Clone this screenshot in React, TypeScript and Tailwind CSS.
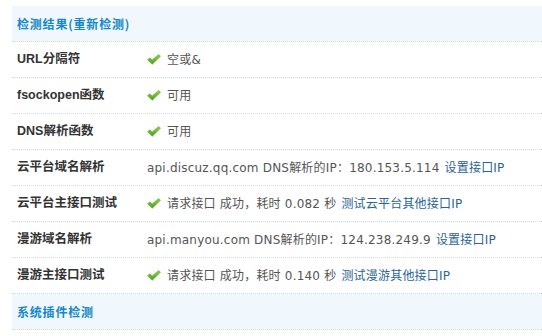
function Check() {
  return (
    <svg width="14" height="11" viewBox="0 0 14 11" className="mr-[6px] shrink-0">
      <defs>
        <linearGradient id="ck" x1="0" y1="0" x2="0" y2="1">
          <stop offset="0" stopColor="#8fd44a" />
          <stop offset="1" stopColor="#4c9e1c" />
        </linearGradient>
      </defs>
      <path
        d="M0.5 5.8 L3 3.8 L5.2 6 L11.6 0.5 L13.5 2.2 L5.3 10.2 Z"
        fill="url(#ck)"
        stroke="#5aa82a"
        strokeWidth="0.6"
        strokeLinejoin="round"
      />
    </svg>
  )
}

const rows: { label: string; ok?: boolean; value: string; link?: string }[] = [
  { label: 'URL分隔符', ok: true, value: '空或&' },
  { label: 'fsockopen函数', ok: true, value: '可用' },
  { label: 'DNS解析函数', ok: true, value: '可用' },
  {
    label: '云平台域名解析',
    value: 'api.discuz.qq.com DNS解析的IP：180.153.5.114',
    link: '设置接口IP'
  },
  {
    label: '云平台主接口测试',
    ok: true,
    value: '请求接口 成功，耗时 0.082 秒',
    link: '测试云平台其他接口IP'
  },
  {
    label: '漫游域名解析',
    value: 'api.manyou.com DNS解析的IP：124.238.249.9',
    link: '设置接口IP'
  },
  {
    label: '漫游主接口测试',
    ok: true,
    value: '请求接口 成功，耗时 0.140 秒',
    link: '测试漫游其他接口IP'
  }
]

export default function App() {
  return (
    <div className="w-[542px] h-[336px] overflow-hidden bg-white pt-[6px] pl-3 text-[12px] text-[#333]">
      <div className="h-[36px] bg-[#f0f7fd] border-b border-dotted border-[#cfdbe6] flex items-center pl-[5px] font-bold text-[#1588c6] font-['Noto_Sans_CJK_SC',sans-serif] tracking-[0.8px]">
        检测结果(重新检测)
      </div>
      {rows.map((r) => (
        <div
          key={r.label}
          className="h-[36px] border-b border-dotted border-[#cfdbe6] flex items-center"
        >
          <div className="w-[135px] pl-[5px] font-bold text-[#333] font-['Liberation_Sans','Noto_Sans_CJK_SC',sans-serif] text-[12.5px]">
            {r.label}
          </div>
          <div className="flex items-center text-[#555] font-['DejaVu_Sans','Noto_Sans_CJK_SC',sans-serif] whitespace-pre tracking-[0.2px]">
            {r.ok && <Check />}
            <span>{r.value}</span>
            {r.link && (
              <a className="ml-[5px] text-[#2a6496] cursor-pointer">{r.link}</a>
            )}
          </div>
        </div>
      ))}
      <div className="h-[36px] bg-[#f0f7fd] border-b border-dotted border-[#cfdbe6] flex items-center pl-[5px] font-bold text-[#1588c6] font-['Noto_Sans_CJK_SC',sans-serif] tracking-[0.8px]">
        系统插件检测
      </div>
    </div>
  )
}
